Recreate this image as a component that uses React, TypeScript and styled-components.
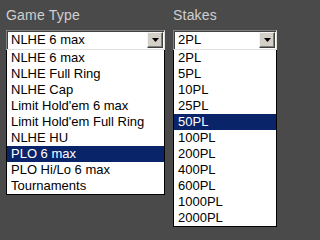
import {useState} from "react";
import styled, {createGlobalStyle} from "styled-components";

const GlobalStyle = createGlobalStyle`
  html, body {
    margin: 0;
    padding: 0;
    background: #4a4a4a;
  }
`;

const StyledPage = styled.div`
  display: flex;
  gap: 8px;
  padding: 7px 0 0 6px;
  width: 286px;
  height: 234px;
  box-sizing: border-box;
  background: #4a4a4a;
  font-family: "Liberation Sans", Arial, sans-serif;
`;

const StyledColumn = styled.div<{$width: number}>`
  display: flex;
  flex-direction: column;
  width: ${p => p.$width}px;
`;

const StyledLabel = styled.div`
  height: 23px;
  padding-left: 0;
  font-size: 14px;
  line-height: 16px;
  letter-spacing: 0.2px;
  color: #cfcfcf;
`;

const StyledSelect = styled.div`
  display: flex;
  align-items: center;
  height: 20px;
  box-sizing: border-box;
  background: #fff;
  border-style: solid;
  border-width: 1px;
  border-color: #808080 #e0e0e0 #e0e0e0 #808080;
  box-shadow: inset 1px 1px 0 #404040;
`;

const StyledValue = styled.div`
  flex: 1;
  padding-left: 4px;
  font-size: 13px;
  line-height: 16px;
  color: #000;
  white-space: nowrap;
`;

const StyledArrowButton = styled.div`
  display: flex;
  align-items: center;
  justify-content: center;
  width: 16px;
  height: 16px;
  margin-right: 1px;
  box-sizing: border-box;
  background: #d4d0c8;
  border-style: solid;
  border-width: 1px;
  border-color: #f4f4f4 #404040 #404040 #f4f4f4;
  box-shadow: inset -1px -1px 0 #808080;
`;

const StyledList = styled.ul`
  margin: 0;
  padding: 0;
  list-style: none;
  background: #fff;
  border: 1px solid #000;
  border-top: none;
`;

const StyledItem = styled.li<{$selected: boolean}>`
  height: 16px;
  padding-left: 4px;
  font-size: 13px;
  line-height: 16px;
  white-space: nowrap;
  cursor: default;
  color: ${p => (p.$selected ? "#fff" : "#000")};
  background: ${p => (p.$selected ? "#0a246a" : "transparent")};
`;

const gameTypes = [
	"NLHE 6 max",
	"NLHE Full Ring",
	"NLHE Cap",
	"Limit Hold'em 6 max",
	"Limit Hold'em Full Ring",
	"NLHE HU",
	"PLO 6 max",
	"PLO Hi/Lo 6 max",
	"Tournaments",
];

const stakes = ["2PL", "5PL", "10PL", "25PL", "50PL", "100PL", "200PL", "400PL", "600PL", "1000PL", "2000PL"];

function Arrow() {
	return (
		<svg width="7" height="4" viewBox="0 0 7 4">
			<path d="M0 0H7L3.5 4Z" fill="#000" />
		</svg>
	);
}

function DropDown({label, width, options, value, hover, onHover}) {
	return (
		<StyledColumn $width={width}>
			<StyledLabel>{label}</StyledLabel>
			<StyledSelect>
				<StyledValue>{value}</StyledValue>
				<StyledArrowButton><Arrow /></StyledArrowButton>
			</StyledSelect>
			<StyledList>
				{options.map(o => (
					<StyledItem key={o} $selected={o === hover} onMouseEnter={() => onHover(o)}>
						{o}
					</StyledItem>
				))}
			</StyledList>
		</StyledColumn>
	);
}

export default function App() {
	const [gameHover, setGameHover] = useState("PLO 6 max");
	const [stakeHover, setStakeHover] = useState("50PL");

	return (
		<>
			<GlobalStyle />
			<StyledPage>
				<DropDown label="Game Type" width={159} options={gameTypes} value="NLHE 6 max"
					hover={gameHover} onHover={setGameHover} />
				<DropDown label="Stakes" width={104} options={stakes} value="2PL"
					hover={stakeHover} onHover={setStakeHover} />
			</StyledPage>
		</>
	);
}
